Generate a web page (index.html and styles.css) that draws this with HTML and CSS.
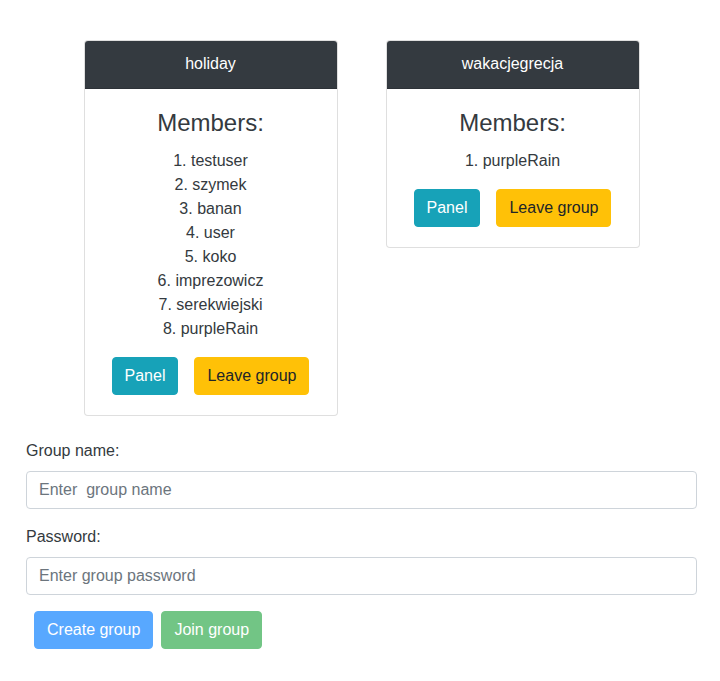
FILE: index.html
```html
<!DOCTYPE html>
<html>
<head>
<meta charset="utf-8">
<link rel="stylesheet" href="styles.css">
</head>
<body>
<main class="page">
  <section class="groups">
    <div class="card">
      <div class="card-header">holiday</div>
      <div class="card-body">
        <h4 class="members-title">Members:</h4>
        <ol class="members">
          <li>1. testuser</li>
          <li>2. szymek</li>
          <li>3. banan</li>
          <li>4. user</li>
          <li>5. koko</li>
          <li>6. imprezowicz</li>
          <li>7. serekwiejski</li>
          <li>8. purpleRain</li>
        </ol>
        <div class="actions">
          <button class="btn btn-info">Panel</button>
          <button class="btn btn-warning">Leave group</button>
        </div>
      </div>
    </div>
    <div class="card">
      <div class="card-header">wakacjegrecja</div>
      <div class="card-body">
        <h4 class="members-title">Members:</h4>
        <ol class="members">
          <li>1. purpleRain</li>
        </ol>
        <div class="actions">
          <button class="btn btn-info">Panel</button>
          <button class="btn btn-warning">Leave group</button>
        </div>
      </div>
    </div>
  </section>
  <form class="group-form">
    <div class="form-group">
      <label class="label" for="gname">Group name:</label>
      <input class="input" id="gname" type="text" placeholder="Enter  group name">
    </div>
    <div class="form-group">
      <label class="label" for="gpass">Password:</label>
      <input class="input" id="gpass" type="password" placeholder="Enter group password">
    </div>
    <div class="form-actions">
      <button type="button" class="btn btn-primary disabled">Create group</button>
      <button type="button" class="btn btn-success disabled">Join group</button>
    </div>
  </form>
</main>
</body>
</html>
```

FILE: styles.css
```css
* { box-sizing: border-box; }
html, body { margin: 0; padding: 0; background: #fff; }
body {
  font-family: "Liberation Sans", Arial, sans-serif;
  font-size: 16px;
  line-height: 24px;
  color: #343a40;
}
.page {
  width: 697px;
  padding: 40px 0 0 26px;
}
.groups {
  display: flex;
  justify-content: center;
  align-items: flex-start;
  gap: 48px;
}
.card {
  width: 254px;
  border: 1px solid rgba(0,0,0,0.125);
  border-radius: 4px;
  overflow: hidden;
  background: #fff;
}
.card-header {
  background: #343a40;
  color: #fff;
  text-align: center;
  padding: 11px 20px 12px;
  border-bottom: 1px solid rgba(0,0,0,0.125);
}
.card-body {
  padding: 20px 20px 20px;
  text-align: center;
}
.members-title {
  margin: 0 0 12px;
  font-size: 24px;
  font-weight: 400;
  line-height: 28px;
  color: #343a40;
}
.members {
  list-style: none;
  margin: 0 0 16px;
  padding: 0;
}
.actions {
  display: flex;
  justify-content: center;
  gap: 16px;
}
.btn {
  font-family: inherit;
  font-size: 16px;
  line-height: 24px;
  padding: 6px 12px;
  border: 1px solid transparent;
  border-radius: 4px;
  cursor: pointer;
}
.btn-info { background: #17a2b8; border-color: #17a2b8; color: #fff; }
.btn-warning { background: #ffc107; border-color: #ffc107; color: #212529; }
.btn-primary { background: #007bff; border-color: #007bff; color: #fff; }
.btn-success { background: #28a745; border-color: #28a745; color: #fff; }
.disabled { opacity: 0.65; }
.group-form {
  margin-top: 23px;
}
.form-group {
  margin-bottom: 16px;
}
.label {
  display: block;
  margin-bottom: 8px;
  color: #343a40;
}
.input {
  display: block;
  width: 100%;
  height: 38px;
  padding: 6px 12px;
  font-family: inherit;
  font-size: 16px;
  line-height: 24px;
  color: #495057;
  border: 1px solid #ced4da;
  border-radius: 4px;
  background: #fff;
}
.input::placeholder { color: #6c757d; opacity: 1; }
.form-actions {
  display: flex;
  gap: 8px;
  padding-left: 8px;
}
```
